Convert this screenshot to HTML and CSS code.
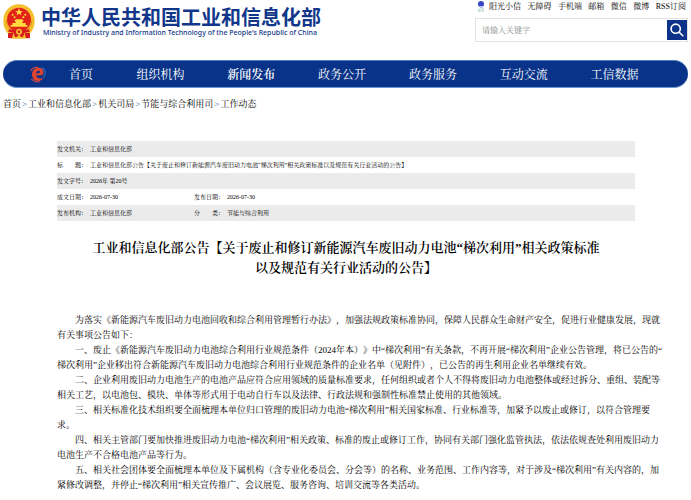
FILE: index.html
```html
<!DOCTYPE html>
<html lang="zh-CN">
<head>
<meta charset="utf-8">
<title>中华人民共和国工业和信息化部</title>
<link rel="stylesheet" href="styles.css">
</head>
<body>
<header class="top">
  <a class="brand" href="#">
    <svg class="emblem" viewBox="0 0 96 105" aria-hidden="true">
      <path d="M48 1C20 1 1 23 1 50c0 20 8 34 19 42l-4 9 16 3h32l16-3-4-9c11-8 19-22 19-42C95 23 76 1 48 1z" fill="#f5c02c"/>
      <circle cx="48" cy="47" r="36" fill="#e2231a"/>
      <path d="M48 13l3 8h8l-6 5 2 8-7-5-7 5 2-8-6-5h8z" fill="#ffdc3c"/>
      <g fill="#ffdc3c"><circle cx="29" cy="32" r="3"/><circle cx="35" cy="40" r="3"/><circle cx="61" cy="40" r="3"/><circle cx="67" cy="32" r="3"/>
      <path d="M34 51l4-5h20l4 5-4 2v4h10v6h5v5H23v-5h5v-6h10v-4z"/></g>
      <path d="M18 74q30 12 60 0l2 10-15 1-5 14h-6l-6-8-6 8h-6l-5-14-15-1z" fill="#d81920"/>
      <path d="M15 88l17-3-5 18-12-1zM81 88l-17-3 5 18 12-1z" fill="#d81920"/>
      <circle cx="48" cy="83" r="9" fill="#f5c02c"/><circle cx="48" cy="83" r="4" fill="#e2231a"/>
      <path d="M22 78q-13-12-13-30M74 78q13-12 13-30" fill="none" stroke="#e99422" stroke-width="3"/>
    </svg>
    <span class="names">
      <span class="name-zh">中华人民共和国工业和信息化部</span>
      <span class="name-en">Ministry of Industry and Information Technology of the People's Republic of China</span>
    </span>
  </a>
  <div class="tools">
    <nav class="quick" aria-label="快捷链接">
      <a href="#" class="mascot"><svg viewBox="0 0 8 13" aria-hidden="true"><path d="M2 8l4-1 1 5H1z" fill="#dcebe6"/><ellipse cx="4" cy="4" rx="3" ry="3" fill="#3545c4"/><path d="M2 6h4v2H3z" fill="#b8c4ee"/><path d="M1 9l2 3M6 8l1 3" stroke="#b5d6c8"/></svg>阳光小信</a>
      <a href="#">无障碍</a><a href="#">手机端</a><a href="#">邮箱</a><a href="#">微信</a><a href="#">微博</a><a href="#">RSS订阅</a>
    </nav>
    <form class="search">
      <input type="text" placeholder="请输入关键字" aria-label="请输入关键字">
      <button type="button" aria-label="搜索"><svg viewBox="0 0 20 20" aria-hidden="true"><circle cx="8.7" cy="8.7" r="4.6"/><path d="M12 12l4.3 4.3"/></svg></button>
    </form>
  </div>
</header>
<nav class="menu" aria-label="主导航">
  <svg class="mark" viewBox="0 0 48 51" aria-hidden="true">
    <path d="M34 8q10 5 9 15 0 8-6 14" fill="none" stroke="#315db0" stroke-width="4"/>
    <path d="M8 37C1 20 12 8 24 8 36 8 41 18 36 28L17 30C19 38 29 41 38 36 31 49 13 48 8 37z" fill="#e2452f"/>
    <path d="M17 24C18 15 28 13 29 22z" fill="#083388"/>
    <path d="M2 16Q10 4 23 7M3 40Q14 49 27 48" fill="none" stroke="#d84b44" stroke-width="3"/>
  </svg>
  <a class="home" href="#">首页</a>
  <a href="#">组织机构</a><a href="#" class="current">新闻发布</a><a href="#">政务公开</a><a href="#">政务服务</a><a href="#">互动交流</a><a href="#">工信数据</a>
</nav>
<nav class="crumbs" aria-label="当前位置">
  <a href="#">首页</a><span>&gt;</span><a href="#">工业和信息化部</a><span>&gt;</span><a href="#">机关司局</a><span>&gt;</span><a href="#">节能与综合利用司</a><span>&gt;</span><a href="#">工作动态</a>
</nav>
<main>
  <table class="meta">
    <tr><th scope="row">发文机关：</th><td colspan="3">工业和信息化部</td></tr>
    <tr><th scope="row">标　　题：</th><td colspan="3">工业和信息化部公告【关于废止和修订新能源汽车废旧动力电池“梯次利用”相关政策标准以及规范有关行业活动的公告】</td></tr>
    <tr><th scope="row">发文字号：</th><td colspan="3">2026年 第20号</td></tr>
    <tr><th scope="row">成文日期：</th><td class="first">2026-07-30</td><th scope="row">发布日期：</th><td>2026-07-30</td></tr>
    <tr><th scope="row">发布机构：</th><td class="first">工业和信息化部</td><th scope="row">分　　类：</th><td>节能与综合利用</td></tr>
  </table>
  <h1>工业和信息化部公告【关于废止和修订新能源汽车废旧动力电池“梯次利用”相关政策标准<br>以及规范有关行业活动的公告】</h1>
  <article>
    <p>为落实《新能源汽车废旧动力电池回收和综合利用管理暂行办法》，加强法规政策标准协同，保障人民群众生命财产安全，促进行业健康发展，现就<br>有关事项公告如下：</p>
    <p>一、废止《新能源汽车废旧动力电池综合利用行业规范条件（2024年本）》中“梯次利用”有关条款，不再开展“梯次利用”企业公告管理，将已公告的“<br>梯次利用”企业移出符合新能源汽车废旧动力电池综合利用行业规范条件的企业名单（见附件），已公告的再生利用企业名单继续有效。</p>
    <p>二、企业利用废旧动力电池生产的电池产品应符合应用领域的质量标准要求，任何组织或者个人不得将废旧动力电池整体或经过拆分、重组、装配等<br>相关工艺，以电池包、模块、单体等形式用于电动自行车以及法律、行政法规和强制性标准禁止使用的其他领域。</p>
    <p>三、相关标准化技术组织要全面梳理本单位归口管理的废旧动力电池“梯次利用”相关国家标准、行业标准等，加紧予以废止或修订，以符合管理要<br>求。</p>
    <p>四、相关主管部门要加快推进废旧动力电池“梯次利用”相关政策、标准的废止或修订工作，协同有关部门强化监管执法，依法依规查处利用废旧动力<br>电池生产不合格电池产品等行为。</p>
    <p>五、相关社会团体要全面梳理本单位及下属机构（含专业化委员会、分会等）的名称、业务范围、工作内容等，对于涉及“梯次利用”有关内容的，加<br>紧修改调整，并停止“梯次利用”相关宣传推广、会议展览、服务咨询、培训交流等各类活动。</p>
  </article>
</main>
</body>
</html>
```

FILE: styles.css
```css
* { box-sizing: border-box; }
body {
  margin: 0;
  background: #fff;
  color: #000;
  font-family: "Liberation Serif", "Noto Serif CJK SC", "Noto Sans CJK SC", serif;
  font-size: 9px;
  text-spacing-trim: space-all;
}
a { color: inherit; text-decoration: none; }
.top { display: flex; justify-content: space-between; height: 60px; padding: 0 3px; }
.brand { display: flex; align-items: flex-start; gap: 6px; padding-top: 4px; color: #12378a; white-space: nowrap; }
.emblem { width: 32px; height: 35px; }
.names { display: flex; flex-direction: column; padding-top: 3px; }
.name-zh { font: bold 20px/22px "Liberation Sans", "Noto Sans CJK SC", sans-serif; }
.name-en { padding-left: 2px; font: 500 7px/8px "Noto Sans", sans-serif; }
.tools { width: 213px; }
.quick { display: flex; justify-content: space-between; height: 18px; padding: 0 2px; font-size: 8px; line-height: 14px; white-space: nowrap; }
.mascot { display: flex; gap: 4px; }
.mascot svg { width: 8px; height: 13px; }
.search { display: flex; align-items: center; height: 24px; border: 1px solid #e2e2e2; }
.search input { flex: 1; min-width: 0; padding: 0 6px; border: 0; background: none; font: inherit; font-size: 8px; outline: 0; }
.search input::placeholder { color: #888; }
.search button { width: 20px; height: 20px; padding: 0; border: 0; background: #0c328a; }
.search svg { display: block; width: 20px; height: 20px; fill: none; stroke: #fff; stroke-width: 1.6; }
.menu {
  display: flex; align-items: center; height: 28px; margin: 0 3px; padding: 0 28px 0 27px;
  border-radius: 14px; border-top: 1px solid #527dbd; border-bottom: 1px solid #7098d0;
  background: #083388; color: #fff; font-size: 12px; white-space: nowrap;
}
.menu a { flex: 1; text-align: center; }
.menu .home { flex: 0 0 68px; }
.menu .current { font-weight: 600; }
.mark { flex: none; width: 17px; height: 18px; }
.crumbs { display: flex; gap: 1px; padding: 9px 3px 0; line-height: 15px; white-space: nowrap; }
.crumbs span { color: #245b96; }
main { padding: 29px 56px 0 57px; }
.meta { width: 100%; border-collapse: collapse; font-size: 6px; line-height: 16px; white-space: nowrap; }
.meta tr:nth-child(odd) { background: #ebebeb; }
.meta th, .meta td { height: 16px; padding: 0; font-weight: normal; text-align: left; }
.meta th { width: 33px; }
.meta .first { width: 104px; }
h1 { margin: 17px 0 0; font-size: 13px; line-height: 20px; font-weight: 600; text-align: center; white-space: nowrap; }
article { margin-top: 35px; line-height: 15px; white-space: nowrap; }
p { margin: 0; text-indent: 2em; }
```
